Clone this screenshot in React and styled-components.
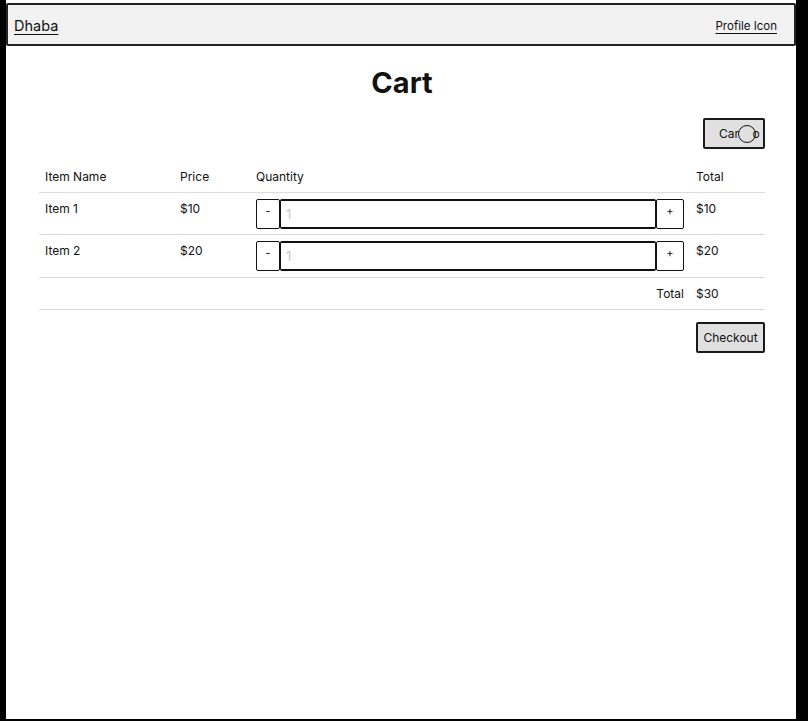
import React from "react";
import styled, { createGlobalStyle } from "styled-components";

const GlobalStyle = createGlobalStyle`
  html, body {
    margin: 0;
    padding: 0;
    background: #000;
    font-family: Inter, "Noto Sans", sans-serif;
    color: #111;
  }
`;

const Frame = styled.div`
  width: 790px;
  height: 719px;
  margin-left: 6px;
  background: #fff;
  display: flex;
  flex-direction: column;
`;

const Header = styled.header`
  margin-top: 3px;
  height: 39px;
  background: #f2f2f2;
  border: 2px solid #222;
  border-radius: 2px;
  display: flex;
  align-items: center;
  justify-content: space-between;
  padding: 0 17px 0 6px;
`;

const Brand = styled.a`
  font-size: 14.5px;
  color: #111;
  text-decoration: underline;
  text-underline-offset: 3px;
  margin-top: 2px;
`;

const ProfileLink = styled.a`
  font-size: 11.5px;
  color: #111;
  text-decoration: underline;
  text-underline-offset: 3px;
  margin-top: 2px;
`;

const Main = styled.main`
  padding: 0 31px 0 33px;
  display: flex;
  flex-direction: column;
`;

const Title = styled.h1`
  margin: 20px 0 0;
  font-size: 29px;
  font-weight: 700;
  text-align: center;
  line-height: 34px;
`;

const ActionRow = styled.div`
  display: flex;
  justify-content: flex-end;
  margin-top: ${(p) => p.$top || 0}px;
`;

const SketchButton = styled.button`
  position: relative;
  height: 31px;
  width: ${(p) => p.$w}px;
  padding: 0 0 0 ${(p) => p.$pad || 0}px;
  justify-content: ${(p) => (p.$pad ? "flex-start" : "center")};
  background: #e0e0e0;
  border: 2px solid #1a1a1a;
  border-radius: 2px;
  font-family: Inter, "Noto Sans", sans-serif;
  font-size: 12px;
  color: #111;
  display: flex;
  align-items: center;
`;

const Spinner = styled.span`
  position: absolute;
  left: 33px;
  top: 5px;
  width: 16px;
  height: 16px;
  border: 1px solid #111;
  border-radius: 50%;
  background: transparent;
`;

const Row = styled.div`
  display: grid;
  grid-template-columns: 135px 76px 440px 1fr;
  align-items: ${(p) => (p.$center ? "center" : "start")};
  min-height: ${(p) => p.$h}px;
  border-bottom: 1px solid #dcdcdc;
  font-size: 12px;
`;

const Cell = styled.div`
  padding: ${(p) => (p.$pt !== undefined ? p.$pt : 8)}px 6px 0;
  text-align: ${(p) => p.$align || "left"};
`;

const Table = styled.div`
  margin-top: 11px;
  display: flex;
  flex-direction: column;
`;

const Qty = styled.div`
  display: flex;
  height: 30px;
  margin: 6px 6px 0 6px;
`;

const StepButton = styled.button`
  width: ${(p) => p.$w}px;
  flex: none;
  background: #fff;
  border: 1.5px solid #111;
  border-radius: 2px;
  font-family: Inter, "Noto Sans", sans-serif;
  font-size: 11px;
  color: #111;
  padding: 0 0 6px;
`;

const QtyInput = styled.input`
  flex: 1;
  min-width: 0;
  border: 2px solid #111;
  border-left-width: 1.5px;
  border-right-width: 1.5px;
  border-radius: 2px;
  font-family: Inter, "Noto Sans", sans-serif;
  font-size: 13px;
  padding: 0 5px 0;
  &::placeholder {
    color: #c8c8c8;
  }
`;

const items = [
  { name: "Item 1", price: 10, h: 41 },
  { name: "Item 2", price: 20, h: 42 },
];

export default function App() {
  return (
    <>
      <GlobalStyle />
      <Frame>
        <Header>
          <Brand>Dhaba</Brand>
          <ProfileLink>Profile Icon</ProfileLink>
        </Header>
        <Main>
          <Title>Cart</Title>
          <ActionRow $top={18}>
            <SketchButton $w={62} $pad={14}>
              Car&nbsp;&nbsp;&nbsp;&nbsp;o
              <Spinner />
            </SketchButton>
          </ActionRow>
          <Table>
            <Row $h={32} $center>
              <Cell $pt={0}>Item Name</Cell>
              <Cell $pt={0}>Price</Cell>
              <Cell $pt={0}>Quantity</Cell>
              <Cell $pt={0}>Total</Cell>
            </Row>
            {items.map((it) => (
              <Row key={it.name} $h={it.h}>
                <Cell>{it.name}</Cell>
                <Cell>${it.price}</Cell>
                <Qty>
                  <StepButton $w={24}>-</StepButton>
                  <QtyInput placeholder="1" />
                  <StepButton $w={28}>+</StepButton>
                </Qty>
                <Cell>${it.price}</Cell>
              </Row>
            ))}
            <Row $h={31} $center>
              <div />
              <div />
              <Cell $pt={0} $align="right">Total</Cell>
              <Cell $pt={0}>$30</Cell>
            </Row>
          </Table>
          <ActionRow $top={12}>
            <SketchButton $w={69}>Checkout</SketchButton>
          </ActionRow>
        </Main>
      </Frame>
    </>
  );
}
